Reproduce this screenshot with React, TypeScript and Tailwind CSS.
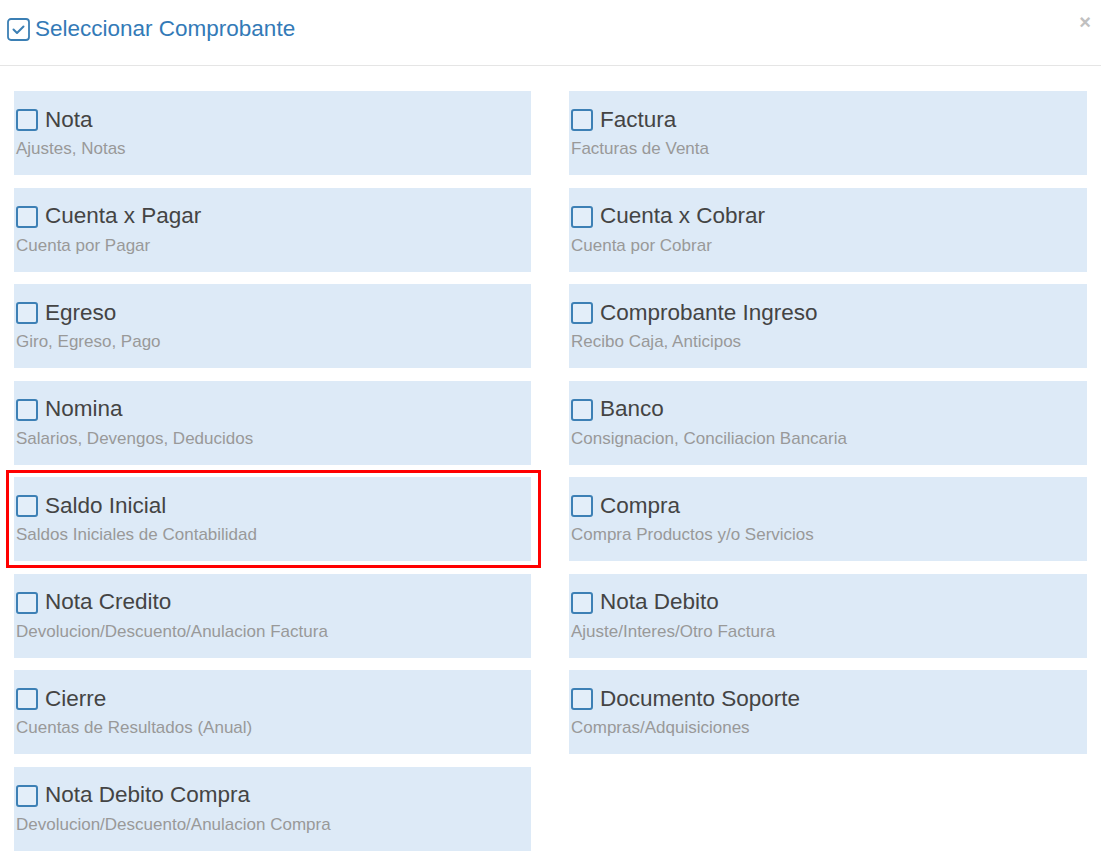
import React from "react";

type Item = { title: string; desc: string; highlight?: boolean };

const items: Item[] = [
  { title: "Nota", desc: "Ajustes, Notas" },
  { title: "Factura", desc: "Facturas de Venta" },
  { title: "Cuenta x Pagar", desc: "Cuenta por Pagar" },
  { title: "Cuenta x Cobrar", desc: "Cuenta por Cobrar" },
  { title: "Egreso", desc: "Giro, Egreso, Pago" },
  { title: "Comprobante Ingreso", desc: "Recibo Caja, Anticipos" },
  { title: "Nomina", desc: "Salarios, Devengos, Deducidos" },
  { title: "Banco", desc: "Consignacion, Conciliacion Bancaria" },
  { title: "Saldo Inicial", desc: "Saldos Iniciales de Contabilidad", highlight: true },
  { title: "Compra", desc: "Compra Productos y/o Servicios" },
  { title: "Nota Credito", desc: "Devolucion/Descuento/Anulacion Factura" },
  { title: "Nota Debito", desc: "Ajuste/Interes/Otro Factura" },
  { title: "Cierre", desc: "Cuentas de Resultados (Anual)" },
  { title: "Documento Soporte", desc: "Compras/Adquisiciones" },
  { title: "Nota Debito Compra", desc: "Devolucion/Descuento/Anulacion Compra" },
];

function CheckedIcon() {
  return (
    <svg width="23" height="23" viewBox="0 0 23 23" fill="none">
      <rect x="1" y="1" width="21" height="21" rx="3" stroke="#3b7fb4" strokeWidth="1.8" />
      <path d="M6.5 11.5 L10 15 L16.5 8.5" stroke="#3b7fb4" strokeWidth="2" strokeLinecap="round" strokeLinejoin="round" />
    </svg>
  );
}

function Card({ item }: { item: Item }) {
  return (
    <div className="relative">
      {item.highlight && (
        <div className="absolute -left-[8px] -right-[10px] -top-[7px] -bottom-[7px] border-[3px] border-[#ff0000] pointer-events-none" />
      )}
      <div className="h-[84px] bg-[#ddeaf7] pl-[2px] pt-[16px]">
        <div className="flex items-center gap-[7px] h-[26px]">
          <span className="w-[22px] h-[22px] rounded-[3px] border-2 border-[#3d80b5] bg-[#e3eef9]" />
          <span className="text-[22.5px] leading-none text-[#444]">{item.title}</span>
        </div>
        <div className="mt-[7px] text-[17px] leading-none text-[#999]">{item.desc}</div>
      </div>
    </div>
  );
}

export default function App() {
  return (
    <div className="w-[1101px] h-[862px] bg-white overflow-hidden font-['Liberation_Sans',Arial,sans-serif]">
      <div className="h-[66px] border-b border-[#e5e5e5] flex items-start relative">
        <div className="flex items-center gap-[5px] pl-[7px] pt-[18px]">
          <CheckedIcon />
          <span className="text-[22.5px] leading-none text-[#337ab7]">Seleccionar Comprobante</span>
        </div>
        <span className="absolute right-[10px] top-[12px] text-[20px] font-bold leading-none text-[#c0c0c0]">×</span>
      </div>
      <div className="grid grid-cols-[517px_518px] gap-x-[38px] gap-y-[12.5px] px-[14px] pt-[25px]">
        {items.map((it) => (
          <Card key={it.title} item={it} />
        ))}
      </div>
    </div>
  );
}
